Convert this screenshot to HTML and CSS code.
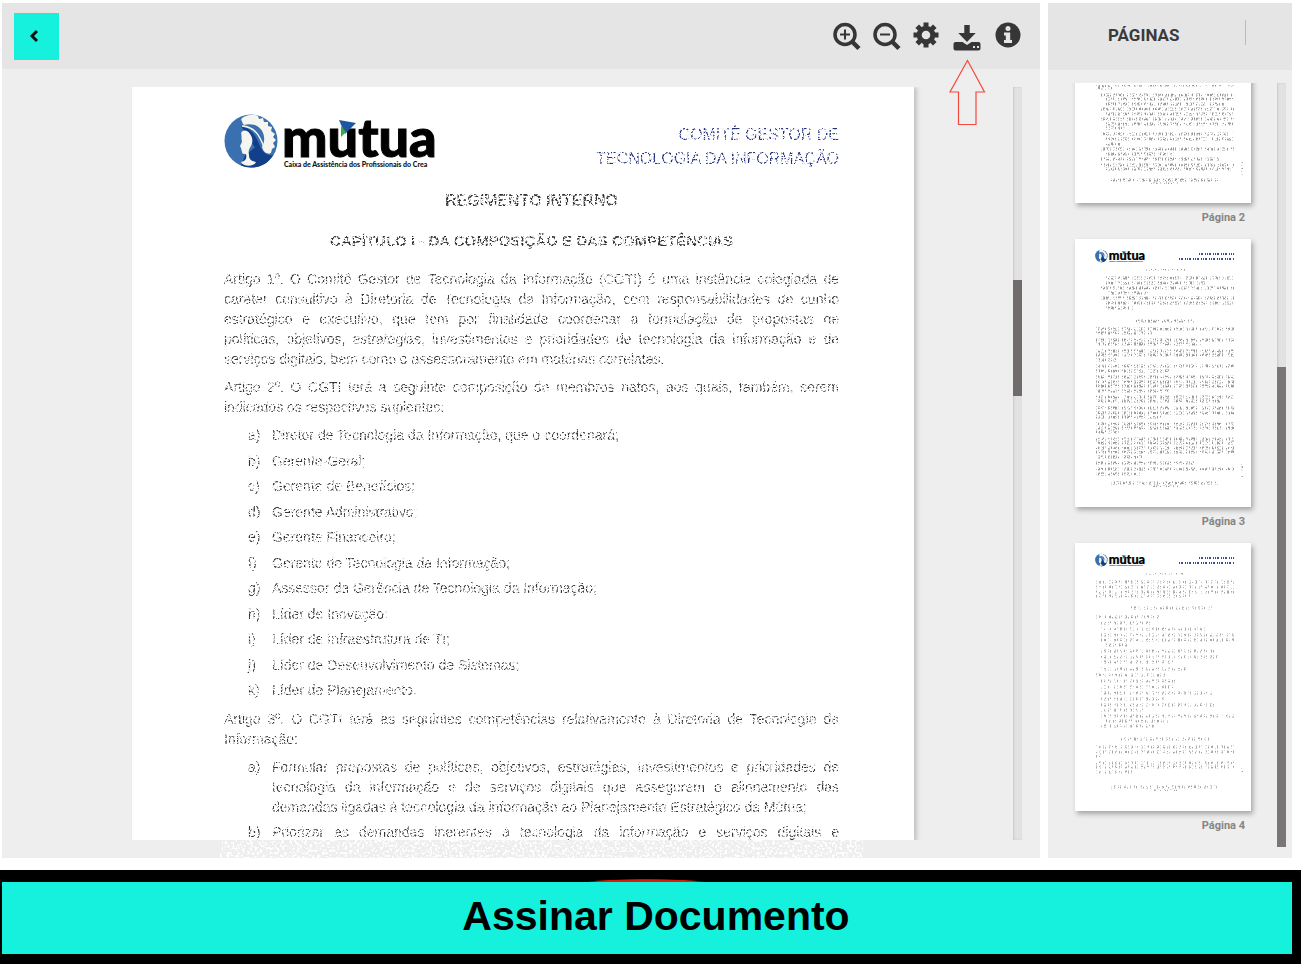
FILE: index.html
```html
<!DOCTYPE html>
<html lang="pt-BR">
<head>
<meta charset="utf-8">
<meta name="viewport" content="width=device-width, initial-scale=1">
<title>Assinar Documento</title>
<link rel="stylesheet" href="styles.css">
</head>
<body>
<svg class="defs" aria-hidden="true">
  <filter id="worn" x="0" y="0" width="100%" height="100%">
    <feTurbulence type="fractalNoise" baseFrequency="0.57" numOctaves="2" seed="7" result="n"/>
    <feColorMatrix in="n" type="matrix" values="0 0 0 0 0  0 0 0 0 0  0 0 0 0 0  0 0 0 -8 4.5" result="m"/>
    <feComposite in="SourceGraphic" in2="m" operator="in"/>
  </filter>
  <filter id="specks" x="0" y="0" width="100%" height="100%">
    <feTurbulence type="fractalNoise" baseFrequency="0.4" numOctaves="2" seed="3" result="n"/>
    <feColorMatrix in="n" type="matrix" values="0 0 0 0 1  0 0 0 0 1  0 0 0 0 1  0 0 0 -9 4.4" result="m"/>
    <feComposite in="SourceGraphic" in2="m" operator="in"/>
  </filter>
  <symbol id="logo" viewBox="0 0 212 58">
    <circle cx="27" cy="29" r="26.500" fill="#3a70b0"/>
    <path d="M17 14C28 16 33 26 36 34c3 7 7 10 13 9C45 51 36 56 27 55.500c-4 0-7-1-10-2l4-10 10-8z" fill="#123f87"/>
    <path d="M18 6C24 2 30 2 34 4l1 3 4-1 1 4 4 0 0 4 4 1-1 4 4 3-2 3 3 3-3 3 2 4-3 2-1 4c-6 2-8-3-9-6 5-9 1-19-7-22-4-1-8-1-11 0-2-2-2-5-3-5z" fill="#f5f6f1"/>
    <path d="M18 14c14 1 18 11 22 21 1 3 3 5 6 6" fill="none" stroke="#f5f6f1" stroke-width="1.500"/>
    <path d="M17 21C19 17 24 18 26 22c3 4 3 8 1 12-2 3-3 5-2 9 0 4 2 6 7 7-2 5-13 5-15 0 5-1 6-4 5-8-2 0-4 0-4-2l-1-4-1-2 2-4c-1-4 0-7-1-9z" fill="#f5f6f1"/>
    <text x="58" y="45" class="logo-name">mutua</text>
    <path d="M115 8 132 11 121 22z" fill="#1d56a3"/>
    <path d="M117 14 122 20 117 25z" fill="#3aa84a"/>
    <text x="60" y="55" class="logo-tag">Caixa de Assistência dos Profissionais do Crea</text>
  </symbol>
</svg>

<main class="viewer">
  <section class="reader" aria-label="Documento">
    <header class="toolbar">
      <button class="back" type="button" aria-label="Voltar"><svg width="12" height="14" viewBox="0 0 12 14"><path d="M8 2 3 7l5 5" fill="none" stroke="#111" stroke-width="3"/></svg></button>
      <div class="tools">
        <button class="tool" type="button" aria-label="Ampliar"><svg viewBox="0 0 28 28"><g fill="none" stroke="#363636"><circle cx="12" cy="12.500" r="10" stroke-width="3.500"/><path d="m19 19.500 7 7" stroke-width="4.500"/><path d="M12 7.500v10M7 12.500h10" stroke-width="2"/></g></svg></button>
        <button class="tool" type="button" aria-label="Reduzir"><svg viewBox="0 0 28 28"><g fill="none" stroke="#363636"><circle cx="12" cy="12.500" r="10" stroke-width="3.500"/><path d="m19 19.500 7 7" stroke-width="4.500"/><path d="M7 12.500h10" stroke-width="2"/></g></svg></button>
        <button class="tool" type="button" aria-label="Configurações"><svg viewBox="0 0 28 28"><g stroke="#363636" fill="none"><circle cx="13" cy="13" r="6.800" stroke-width="5"/><path d="M13 .5v4M13 21.500v4M.5 13h4M21.500 13h4M4.200 4.200 7 7M19 19l2.800 2.800M21.800 4.200 19 7M7 19l-2.800 2.800" stroke-width="5"/></g></svg></button>
        <div class="download">
          <button class="tool" type="button" aria-label="Baixar"><svg viewBox="0 0 28 28"><g fill="#363636"><path d="M11.300 3h5.400v8h6L14 20 5.300 11h6z"/><path fill-rule="evenodd" d="M2.500 20h7l4.500 3 4.500-3h7q2 0 2 2v4.500q0 2-2 2h-23q-2 0-2-2V22q0-2 2-2zM20 24v2h2v-2zm4 0v2h2v-2z"/></g></svg></button>
          <svg class="pointer" viewBox="0 0 37 68" aria-hidden="true"><path d="M18.500 1.500 35.500 33H27v32.500H9.500V33H1z" fill="none" stroke="#f5493d" stroke-width="1.200"/></svg>
        </div>
        <button class="tool" type="button" aria-label="Informações"><svg viewBox="0 0 28 28"><circle cx="15" cy="13" r="12.500" fill="#363636"/><g fill="#e5e5e5"><circle cx="15" cy="6.500" r="2.500"/><path d="M11 10.500h6.200v7.500H19v3h-8v-3h1.800v-4.500H11z"/></g></svg></button>
      </div>
    </header>
    <div class="stage">
      <div class="stage-view">
        <article class="page">
          <div class="letterhead">
            <svg class="logo" role="img" aria-label="Mútua"><use href="#logo"/></svg>
            <p class="committee worn">COMITÊ GESTOR DE<br>TECNOLOGIA DA INFORMAÇÃO</p>
          </div>
          <div class="worn">
            <h1 class="title">REGIMENTO INTERNO</h1>
            <h2 class="title">CAPÍTULO I - DA COMPOSIÇÃO E DAS COMPETÊNCIAS</h2>
            <p class="para">Artigo 1º. O Comitê Gestor de Tecnologia da Informação (CGTI) é uma instância colegiada de caráter consultivo à Diretoria de Tecnologia da Informação, com responsabilidades de cunho estratégico e executivo, que tem por finalidade coordenar a formulação de propostas de políticas,&nbsp;objetivos, estratégias, investimentos e prioridades de tecnologia da informação e de serviços&nbsp;digitais, bem como o assessoramento em matérias correlatas.</p>
            <p class="para">Artigo 2º. O CGTI terá a seguinte composição de membros natos, aos quais, também, serem indicados os respectivos suplentes:</p>
            <ol class="items members">
              <li>Diretor de Tecnologia da Informação, que o coordenará;</li>
              <li>Gerente-Geral;</li>
              <li>Gerente de Benefícios;</li>
              <li>Gerente Administrativo;</li>
              <li>Gerente Financeiro;</li>
              <li>Gerente de Tecnologia da Informação;</li>
              <li>Assessor da Gerência de Tecnologia da Informação;</li>
              <li>Líder de Inovação;</li>
              <li>Líder de Infraestrutura de TI;</li>
              <li>Líder de Desenvolvimento de Sistemas;</li>
              <li>Líder de Planejamento.</li>
            </ol>
            <p class="para">Artigo 3º. O CGTI terá as seguintes competências relativamente à Diretoria de Tecnologia da Informação:</p>
            <ol class="items duties">
              <li>Formular propostas de políticas, objetivos, estratégias, investimentos e prioridades de tecnologia da informação e de serviços digitais que assegurem o alinhamento das demandas ligadas à tecnologia da informação ao Planejamento Estratégico da Mútua;</li>
              <li class="cont">Priorizar as demandas inerentes à tecnologia da informação e serviços digitais e</li>
            </ol>
          </div>
        </article>
      </div>
      <div class="scroll"><div class="scroll-thumb reader-thumb"></div></div>
      <div class="specks"></div>
    </div>
  </section>

  <aside class="sidebar" aria-label="Páginas">
    <header class="side-head"><h2 class="side-title">PÁGINAS</h2></header>
    <div class="side-body">
      <div class="thumbs">
        <figure class="thumb">
          <svg class="sheet" viewBox="0 0 176 268" aria-hidden="true">
            <path class="lines" d="M21 150H159M21 153H38M26 160H159M31 164H159M31 169H149M26 174H159M31 179H159M26 184H159M31 189H159M31 193H50M26 199H159M31 204H159M31 209H45M26 214H159M31 219H100M26 224H145M26 230H159M31 234H159M36 245H143M76 249H104M168 227V240"/>
          </svg>
          <figcaption>Página 2</figcaption>
        </figure>
        <figure class="thumb">
          <svg class="sheet" viewBox="0 0 176 268" aria-hidden="true">
            <use href="#logo" x="20" y="10" width="50" height="14"/>
            <path class="lines blue" d="M124 15H159M104 20H159"/>
            <path class="lines" d="M71 30H110M31 39H159M31 44H130M26 49H159M31 54H74M26 59H159M31 64H159M31 69H58M61 82H119M21 90H159M21 94H77M21 101H159M21 105H126M21 112H159M21 116H159M21 121H41M21 127H159M21 132H94M21 138H159M21 143H159M21 147H159M21 152H95M21 158H159M21 162H145M21 169H159M21 174H159M21 178H86M21 185H159M21 189H159M21 193H45M21 200H159M21 204H159M21 209H159M21 213H159M21 218H67M21 224H119M21 230H159M21 235H65M36 244H143M76 248H104M168 225V238"/>
          </svg>
          <figcaption>Página 3</figcaption>
        </figure>
        <figure class="thumb">
          <svg class="sheet" viewBox="0 0 176 268" aria-hidden="true">
            <use href="#logo" x="20" y="10" width="50" height="14"/>
            <path class="lines blue" d="M124 15H159M104 20H159"/>
            <path class="lines faint" d="M71 30H110M21 39H159M21 44H159M21 49H159M21 53H115M56 65H138M21 74H85M26 80H77M26 86H130M26 92H159M26 97H159M31 102H54M26 108H140M26 114H143M26 119H98M26 126H112M21 132H92M26 138H101M26 144H98M26 150H138M26 156H90M26 162H139M26 167H70M26 173H159M31 178H93M26 183H79M46 196H135M21 204H159M21 209H159M21 213H26M21 220H159M21 224H159M21 229H57M36 244H143M76 248H104M168 225V238"/>
          </svg>
          <figcaption>Página 4</figcaption>
        </figure>
      </div>
      <div class="scroll"><div class="scroll-thumb side-thumb"></div></div>
    </div>
  </aside>
</main>

<footer class="actions">
  <button class="sign" type="button">Assinar Documento</button>
</footer>
</body>
</html>
```
FILE: styles.css
```css
* { box-sizing: border-box; }
body {
  margin: 0;
  height: 100vh;
  display: flex;
  flex-direction: column;
  background: #fff;
  font-family: "Liberation Sans", Arial, sans-serif;
}
h1, h2, p, figure, ol { margin: 0; padding: 0; }
button { border: 0; padding: 0; background: none; cursor: pointer; }
.defs { position: absolute; width: 0; height: 0; }

.viewer {
  flex: 1;
  min-height: 0;
  display: grid;
  grid-template-columns: minmax(0, 1fr) 244px;
  grid-template-rows: minmax(0, 1fr);
  gap: 8px;
  padding: 3px 9px 12px 2px;
}
.reader, .sidebar {
  display: flex;
  flex-direction: column;
  min-height: 0;
  background: #eee;
}

.toolbar {
  flex: none;
  display: flex;
  align-items: center;
  justify-content: space-between;
  height: 66px;
  padding: 0 19px 0 11px;
  background: #e5e5e5;
}
.back {
  display: flex;
  align-items: center;
  justify-content: center;
  width: 47px;
  height: 49px;
  padding-right: 4px;
  border: 1px solid #f3dede;
  background: #16f1dd;
}
.tools { display: flex; gap: 12px; }
.tool { display: block; width: 28px; height: 28px; }
.tool svg { display: block; width: 28px; height: 28px; overflow: visible; }
.download { position: relative; }
.pointer {
  position: absolute;
  top: 37px;
  left: -4px;
  width: 37px;
  height: 68px;
  z-index: 2;
}

.stage {
  position: relative;
  flex: 1;
  min-height: 0;
  display: flex;
  padding: 18px 18px 18px 31px;
}
.stage-view { flex: 1; overflow: hidden; }
.page {
  max-width: 782px;
  min-height: 100%;
  margin: 0 auto;
  padding: 24px 75px 0 92px;
  background: #fff;
  box-shadow: 3px 0 4px #c4c4c4;
  color: #333;
  font-size: 14px;
  line-height: 20px;
}
.worn { filter: url(#worn); }
.letterhead { display: flex; justify-content: space-between; height: 80px; }
.logo { width: 212px; height: 60px; }
.logo-name { font: 900 54px Lato, sans-serif; fill: #000; stroke: #000; stroke-width: 1px; }
.logo-tag { font: 900 7px Lato, sans-serif; fill: #111; }
.committee {
  padding-top: 12px;
  color: #24307e;
  font-size: 16px;
  line-height: 24px;
  text-align: right;
}
.title { margin-bottom: 20px; font-size: 16px; line-height: 20px; text-align: center; }
h2.title { margin-bottom: 18px; font-size: 15px; }
.para { margin-bottom: 8px; text-align: justify; }
.items { padding-left: 24px; list-style: none; counter-reset: item; }
.items li {
  counter-increment: item;
  display: grid;
  grid-template-columns: 24px 1fr;
  text-align: justify;
}
.items li::before { content: counter(item, lower-alpha) ")"; }
.members { margin-bottom: 9px; }
.members li { margin-bottom: 6px; }
.members li:nth-child(even) { margin-bottom: 5px; }
.duties li { margin-bottom: 5px; }
.cont { text-align-last: justify; }
.items .cont::before { text-align-last: left; }
.specks {
  position: absolute;
  left: 21%;
  right: 17%;
  bottom: 0;
  height: 18px;
  background: #fff;
  filter: url(#specks);
}

.scroll {
  flex: none;
  width: 9px;
  background: #e2e2e2;
  box-shadow: inset 1px 0 2px #c8c8c8;
}
.scroll-thumb { position: relative; background: #7a7675; }
.reader-thumb { top: 25.6%; height: 15.4%; background: #706c6b; }
.side-thumb { top: 37.200%; height: 62.800%; }

.side-head {
  flex: none;
  display: flex;
  align-items: center;
  height: 67px;
  padding: 0 46px 0 60px;
  background: #e5e5e5;
}
.side-title {
  flex: 1;
  height: 25px;
  margin-bottom: 8px;
  border-right: 1px solid #bbb;
  color: #3a3a3a;
  font: 700 17px/30px Roboto, sans-serif;
}
.side-body {
  flex: 1;
  min-height: 0;
  display: flex;
  gap: 10px;
  padding: 13px 6px 11px 17px;
}
.thumbs {
  flex: 1;
  min-width: 0;
  display: flex;
  flex-direction: column;
  justify-content: flex-end;
  overflow: hidden;
  padding: 0 16px 0 10px;
}
.thumb { flex: none; }
.sheet {
  display: block;
  width: 100%;
  background: #fff;
  box-shadow: 2px 3px 5px #aaa3a3;
}
.thumb figcaption {
  height: 36px;
  padding: 0 6px;
  color: #858585;
  font: 700 11px/30px Roboto, sans-serif;
  text-align: right;
}
.lines {
  fill: none;
  stroke: #999;
  stroke-width: 3;
  stroke-dasharray: 1 1 2 1 3 1 1 2 2 1 1 1 4 1 1 3;
  filter: url(#worn);
}
.blue { stroke: #3b4a9c; filter: none; stroke-dasharray: 1 1 2 2 1 1; stroke-width: 2; }
.faint { stroke: #a8a8a8; stroke-dasharray: 1 2 2 2 1 1 1 3 2 1; }

.actions {
  flex: none;
  padding: 12px 9px 10px 2px;
  background: #000 radial-gradient(ellipse 60px 3px at 646px 12px, #d81e05 80%, transparent) no-repeat;
}
.sign {
  display: block;
  width: 100%;
  height: 72px;
  padding: 0 0 5px 18px;
  background: #16f1dd;
  color: #000;
  font: 700 41px/48px "Liberation Sans", Arial, sans-serif;
}
```
